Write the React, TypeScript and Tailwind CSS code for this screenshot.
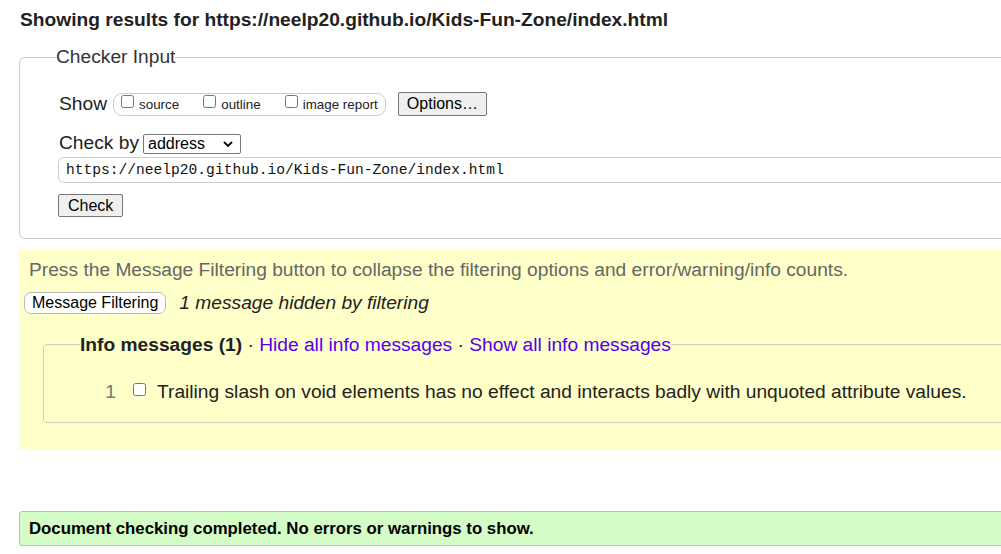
import React from 'react';

const url = 'https://neelp20.github.io/Kids-Fun-Zone/index.html';

function ShowOption({ label }: { label: string }) {
  return (
    <label className="flex items-start gap-[5px]">
      <input type="checkbox" className="mt-[1px] w-[13px] h-[13px] m-0" />
      <span className="text-[13.4px] leading-[20px] mt-[1px]">{label}</span>
    </label>
  );
}

export default function App() {
  return (
    <div className="w-full overflow-hidden bg-white text-[#222] font-['Liberation_Sans',Arial,sans-serif] text-[19.2px]">
      <div className="w-[1100px] pl-[19px] pt-[8px] pb-[10px]">
        {/* Result heading */}
        <h2 className="pl-[1px] text-[19.2px] font-bold leading-[24px]">Showing results for {url}</h2>

        {/* Checker input */}
        <fieldset className="mt-[13px] border border-[#ccc] rounded-[6px] pl-[36px] pb-[21px]">
          <legend className="px-0 text-[19.2px] leading-[24px] text-[#333]">Checker Input</legend>
          <div className="pl-[3px] pt-[23px]">
            <div className="flex items-center gap-[6px] h-[24px]">
              <span className="text-[19.2px]">Show</span>
              <div className="flex items-center gap-[24px] border border-[#ccc] rounded-[9px] h-[23px] pl-[7px] pr-[7px]">
                <ShowOption label="source" />
                <ShowOption label="outline" />
                <ShowOption label="image report" />
              </div>
              <button className="ml-[6px] h-[24px] px-[8px] bg-[#efefef] border border-[#767676] rounded-[2px] text-[16px] leading-[20px] text-black">
                Options…
              </button>
            </div>
          </div>
          <div className="pl-[3px] mt-[17px] flex items-center gap-[4px] h-[21px]">
            <span className="text-[19.2px]">Check by</span>
            <div className="relative flex">
              <select className="appearance-none w-[98px] h-[20px] border border-[#767676] rounded-[2px] pl-[4px] text-[16px] leading-[18px] text-black bg-white">
                <option>address</option>
              </select>
              <svg className="absolute right-[8px] top-[6px] w-[10px] h-[8px] pointer-events-none" viewBox="0 0 10 8">
                <path d="M1 2l4 4 4-4" fill="none" stroke="#000" strokeWidth="1.8" />
              </svg>
            </div>
          </div>
          <div className="mt-[3px] ml-[2px] flex">
            <input
              readOnly
              value={url}
              className="w-[1100px] h-[26px] border border-[#ccc] rounded-[6px] px-[7px] font-['Liberation_Mono','Courier_New',monospace] text-[14.6px] text-[#111]"
            />
          </div>
          <div className="mt-[11px] ml-[2px] flex">
            <button className="h-[23px] px-[9px] bg-[#efefef] border border-[#767676] rounded-[2px] text-[16px] leading-[20px] text-black">
              Check
            </button>
          </div>
        </fieldset>

        {/* Filtering area */}
        <div className="mt-[11px] h-[200px] bg-[#ffffc9] pl-[10px] pt-[9px]">
          <p className="text-[19.2px] leading-[22px] text-[#666]">
            Press the Message Filtering button to collapse the filtering options and error/warning/info counts.
          </p>
          <div className="mt-[8px] -ml-[5px] flex items-center gap-[13px]">
            <button className="h-[22px] px-[7px] bg-white border border-[#bbb] rounded-[7px] text-[16px] leading-[18px] text-black">
              Message Filtering
            </button>
            <span className="italic text-[19.2px]">1 message hidden by filtering</span>
          </div>
          <fieldset className="mt-[15px] ml-[14px] border border-[#ccc] rounded-[4px] pl-[36px] h-[90px]">
            <legend className="text-[19.2px] leading-[24px]">
              <b>Info messages (1)</b> · <a className="text-[#5500ee]">Hide all info messages</a> ·{' '}
              <a className="text-[#5500ee]">Show all info messages</a>
            </legend>
            <div className="pt-[21px] flex items-center">
              <span className="w-[36px] text-right text-[19.2px] text-[#777]">1</span>
              <input type="checkbox" className="ml-[17px] -mt-[6px] w-[13px] h-[13px]" />
              <span className="ml-[11px] text-[19.2px]">
                Trailing slash on void elements has no effect and interacts badly with unquoted attribute values.
              </span>
            </div>
          </fieldset>
        </div>

        {/* Completion notice */}
        <div className="mt-[61px] h-[35px] bg-[#d4fcc6] border border-[#bbb] rounded-[3px] pl-[9px] flex items-center">
          <span className="text-[16.8px] font-bold text-black">Document checking completed. No errors or warnings to show.</span>
        </div>
      </div>
    </div>
  );
}
